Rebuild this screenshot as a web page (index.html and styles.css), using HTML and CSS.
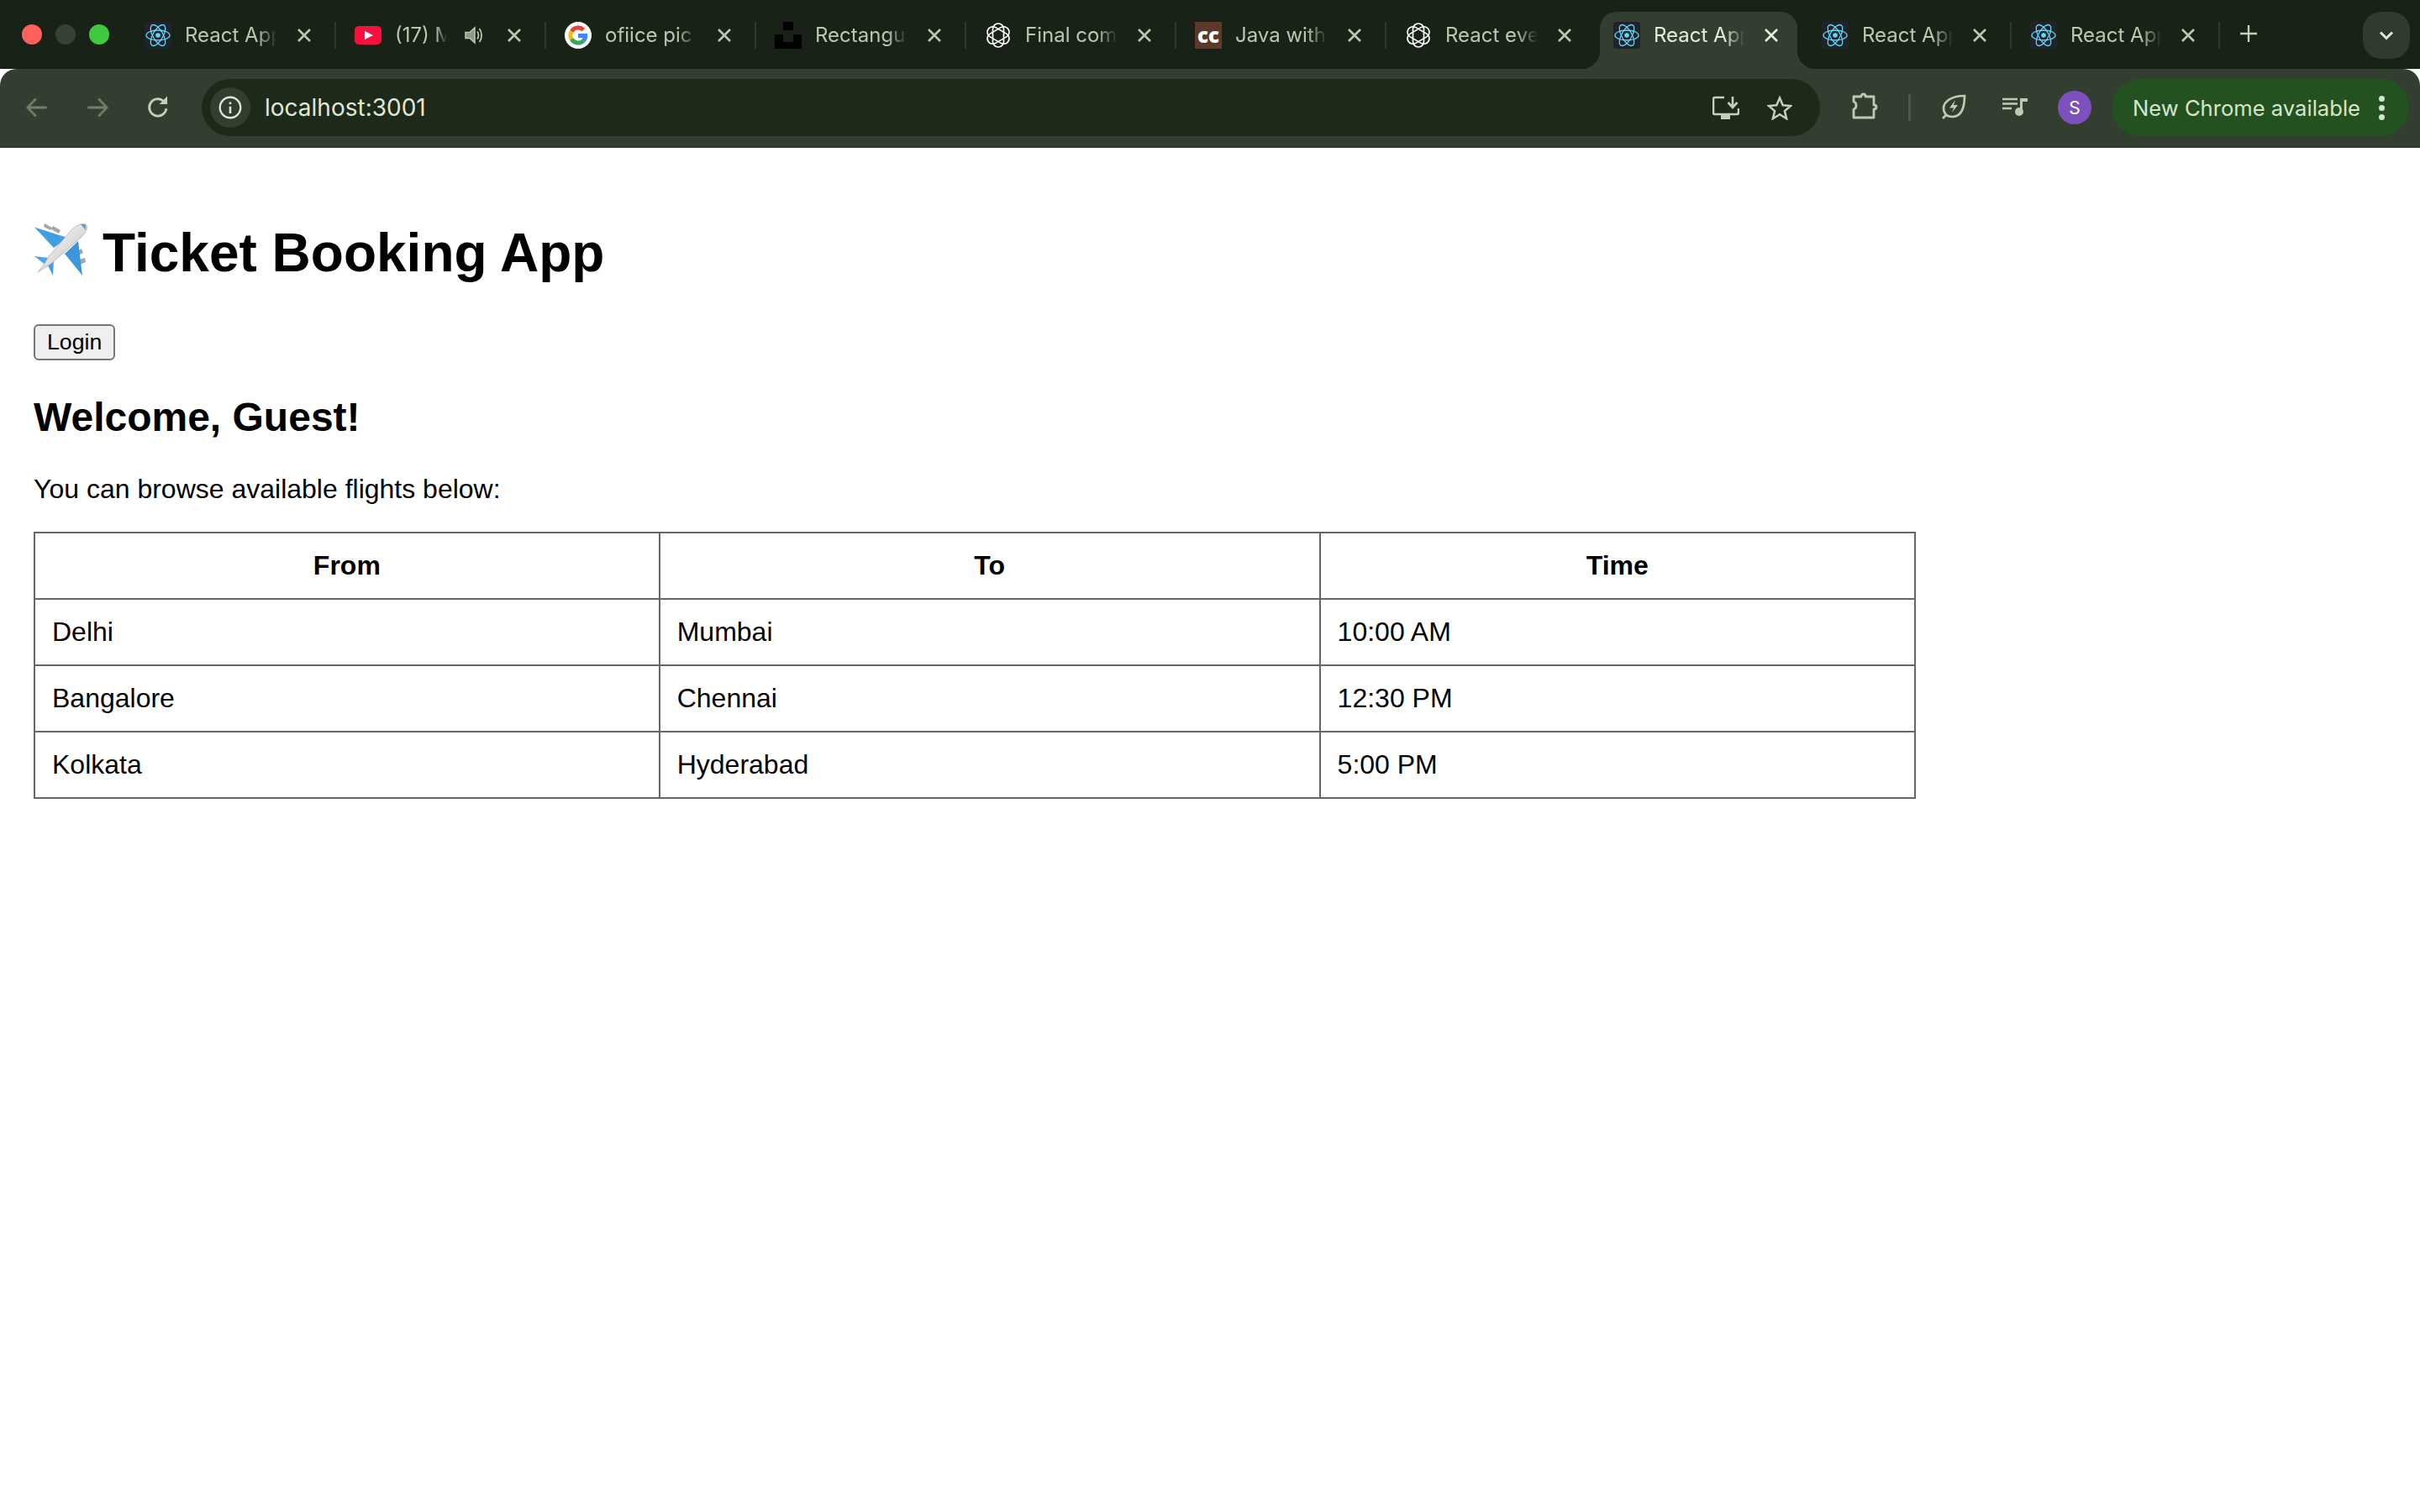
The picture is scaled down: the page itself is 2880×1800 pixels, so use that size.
FILE: index.html
```html
<!DOCTYPE html>
<html lang="en">
<head>
    <meta charset="UTF-8">
    <title>React App</title>
    <link rel="stylesheet" href="styles.css">
</head>
<body>
    <svg class="icon-defs" width="0" height="0">
        <symbol id="react" viewBox="0 0 32 32">
            <rect width="32" height="32" rx="3" fill="#20232a"/>
            <g fill="none" stroke="#61dafb" stroke-width="1.3">
                <ellipse cx="16" cy="16" rx="14" ry="6"/>
                <ellipse cx="16" cy="16" rx="14" ry="6" transform="rotate(60 16 16)"/>
                <ellipse cx="16" cy="16" rx="14" ry="6" transform="rotate(120 16 16)"/>
            </g>
            <circle cx="16" cy="16" r="2.8" fill="#61dafb"/>
        </symbol>
        <symbol id="openai" viewBox="0 0 32 32">
            <g fill="none" stroke="#fff" stroke-width="1.7">
                <rect x="9.500" y="2" width="13" height="28" rx="6.500"/>
                <rect x="9.500" y="2" width="13" height="28" rx="6.500" transform="rotate(60 16 16)"/>
                <rect x="9.500" y="2" width="13" height="28" rx="6.500" transform="rotate(120 16 16)"/>
            </g>
        </symbol>
        <symbol id="close" viewBox="0 0 24 24">
            <path d="M5 5 19 19M19 5 5 19" fill="none" stroke="currentColor" stroke-width="2.6"/>
        </symbol>
    </svg>

    <header class="tabstrip">
        <div class="traffic-lights">
            <span class="light red"></span>
            <span class="light idle"></span>
            <span class="light green"></span>
        </div>

        <div class="tab">
            <svg class="favicon"><use href="#react"/></svg>
            <span class="tab-title">React App</span>
            <svg class="tab-close"><use href="#close"/></svg>
        </div>
        <span class="tab-sep"></span>

        <div class="tab">
            <svg class="favicon" viewBox="0 0 32 32">
                <rect y="5" width="32" height="22" rx="5" fill="#f9103c"/>
                <path d="M12 11 22 16 12 21Z" fill="#fff"/>
            </svg>
            <span class="tab-title">(17) M</span>
            <svg class="tab-audio" viewBox="0 0 24 24">
                <path d="M2 8.5H7L13 3V21L7 15.500H2Z" fill="#8d9b85" stroke="#b9c8ae" stroke-width="1.5"/>
                <path d="M16 7.500C18 10 18 14 16 16.500M18.500 4C22 8.500 22 15.500 18.500 20" fill="none" stroke="#b9c8ae" stroke-width="1.8"/>
            </svg>
            <svg class="tab-close"><use href="#close"/></svg>
        </div>
        <span class="tab-sep"></span>

        <div class="tab">
            <svg class="favicon" viewBox="0 0 32 32">
                <circle cx="16" cy="16" r="16" fill="#fff"/>
                <g fill="none" stroke-width="5">
                    <path d="M8.200 11.500A9 9 0 0 1 22.400 9.600" stroke="#ea4335"/>
                    <path d="M8.200 11.500A9 9 0 0 0 8.200 20.500" stroke="#fbbc05"/>
                    <path d="M8.200 20.500A9 9 0 0 0 22.400 22.400" stroke="#34a853"/>
                    <path d="M16 16.500H27M24.900 16A9 9 0 0 1 22.400 22.400" stroke="#4285f4"/>
                </g>
            </svg>
            <span class="tab-title">ofiice pic</span>
            <svg class="tab-close"><use href="#close"/></svg>
        </div>
        <span class="tab-sep"></span>

        <div class="tab">
            <svg class="favicon" viewBox="0 0 32 32">
                <path d="M10 0H22V10H10ZM0 15H10V24H22V15H32V32H0Z" fill="#000"/>
            </svg>
            <span class="tab-title">Rectangu</span>
            <svg class="tab-close"><use href="#close"/></svg>
        </div>
        <span class="tab-sep"></span>

        <div class="tab">
            <svg class="favicon"><use href="#openai"/></svg>
            <span class="tab-title">Final com</span>
            <svg class="tab-close"><use href="#close"/></svg>
        </div>
        <span class="tab-sep"></span>

        <div class="tab">
            <span class="favicon cc-icon">cc</span>
            <span class="tab-title">Java with</span>
            <svg class="tab-close"><use href="#close"/></svg>
        </div>
        <span class="tab-sep"></span>

        <div class="tab">
            <svg class="favicon"><use href="#openai"/></svg>
            <span class="tab-title">React eve</span>
            <svg class="tab-close"><use href="#close"/></svg>
        </div>

        <div class="tab active">
            <svg class="favicon"><use href="#react"/></svg>
            <span class="tab-title">React App</span>
            <svg class="tab-close"><use href="#close"/></svg>
        </div>

        <div class="tab after-active">
            <svg class="favicon"><use href="#react"/></svg>
            <span class="tab-title">React App</span>
            <svg class="tab-close"><use href="#close"/></svg>
        </div>
        <span class="tab-sep"></span>

        <div class="tab after-active">
            <svg class="favicon"><use href="#react"/></svg>
            <span class="tab-title">React App</span>
            <svg class="tab-close"><use href="#close"/></svg>
        </div>
        <span class="tab-sep"></span>

        <svg class="new-tab" viewBox="0 0 24 24">
            <path d="M12 2V22M2 12H22" fill="none" stroke="#c3d1b9" stroke-width="2.400"/>
        </svg>

        <div class="tab-search">
            <svg viewBox="0 0 24 24" width="24" height="24">
                <path d="M5 8.500 12 15.500 19 8.500" fill="none" stroke="#dfe8d8" stroke-width="3"/>
            </svg>
        </div>
    </header>

    <nav class="toolbar">
        <button class="nav-btn">
            <svg viewBox="0 0 24 24"><path d="M22 12H3M11 3 2.500 12 11 21" fill="none" stroke="#6f7d69" stroke-width="2.400"/></svg>
        </button>
        <button class="nav-btn">
            <svg viewBox="0 0 24 24"><path d="M2 12H21M13 3 21.500 12 13 21" fill="none" stroke="#6f7d69" stroke-width="2.400"/></svg>
        </button>
        <button class="nav-btn">
            <svg viewBox="0 0 24 24"><path d="M20.500 13A8.700 8.700 0 1 1 17.500 5.300" fill="none" stroke="#c3d1b9" stroke-width="2.400"/><path d="M13.500 8.500H21.500V0.500Z" fill="#c3d1b9"/></svg>
        </button>

        <div class="omnibox">
            <span class="site-info">
                <svg viewBox="0 0 24 24" width="28" height="28">
                    <circle cx="12" cy="12" r="10.500" fill="none" stroke="#dfe8d8" stroke-width="2"/>
                    <path d="M12 11V18M12 6.500V8.500" fill="none" stroke="#dfe8d8" stroke-width="2.200"/>
                </svg>
            </span>
            <span class="url">localhost:3001</span>
            <svg class="install-icon" viewBox="0 0 32 28">
                <path d="M14 2H3Q1 2 1 4V20Q1 22 3 22H29Q31 22 31 20V15" fill="none" stroke="#c3d1b9" stroke-width="2.600"/>
                <path d="M10 22H21V28H10Z" fill="#c3d1b9"/>
                <path d="M24 1V13M18.500 8 24 14 29.500 8" fill="none" stroke="#c3d1b9" stroke-width="2.600"/>
            </svg>
            <svg class="star-icon" viewBox="0 0 30 29">
                <path d="M15 2.500 18.700 11.300 28 12 20.900 18.100 23.100 27.200 15 22.300 6.900 27.200 9.100 18.100 2 12 11.300 11.300Z" fill="none" stroke="#c3d1b9" stroke-width="2.500"/>
            </svg>
        </div>

        <svg class="puzzle-icon" viewBox="0 0 32 32">
            <path d="M2 5H11C11 1 16 1 16 5H26V15C30 15 30 20 26 20V30H2V20C6 19 6 12 2 11Z" fill="none" stroke="#bccbb1" stroke-width="2.800" stroke-linejoin="round"/>
        </svg>
        <span class="toolbar-sep"></span>
        <svg class="leaf-icon" viewBox="0 0 30 30">
            <path d="M28 2C28 16 24 27 13 27C6 27 3 22 3 17C3 8 14 2 28 2Z" fill="none" stroke="#bccbb1" stroke-width="2.700"/>
            <path d="M7 24 2 29" fill="none" stroke="#bccbb1" stroke-width="2.700"/>
            <path d="M17 7 10 16.500H15L13 22 20 13H15Z" fill="#bccbb1"/>
        </svg>
        <svg class="queue-icon" viewBox="0 0 30 22">
            <path d="M0 2H18M0 7.500H18M0 13H11" fill="none" stroke="#bccbb1" stroke-width="2.400"/>
            <path d="M21 1H30V5H24V17H21Z" fill="#bccbb1"/>
            <circle cx="20" cy="17" r="5" fill="#bccbb1"/>
        </svg>
        <span class="avatar">S</span>

        <div class="update-chip">
            <span>New Chrome available</span>
            <span class="chip-dots"><i></i><i></i><i></i></span>
        </div>
    </nav>

    <main class="page">
        <h1 class="page-title">
            <svg class="plane" viewBox="10 7 64 63">
                <defs>
                    <linearGradient id="planeBody" x1="0" y1="0" x2="1" y2="1">
                        <stop offset="0" stop-color="#ffffff"/>
                        <stop offset="0.55" stop-color="#dcdcdc"/>
                        <stop offset="1" stop-color="#808080"/>
                    </linearGradient>
                </defs>
                <path d="M23 7 32 12 30 15 22 11ZM33 10 42 15 40 19 31 14ZM60 41 67 37 69 42 62 46ZM64 50 71 48 72 53 65 56Z" fill="#a5a5a5"/>
                <path d="M11 11.500 50 24 34 36Z" fill="#3f9fe2"/>
                <path d="M68 69 63 28 47 43Z" fill="#3a97dc"/>
                <path d="M11 46 28 48 25 57Z" fill="#4aa6e6"/>
                <path d="M33 69 26 55 34 49Z" fill="#3f9fe2"/>
                <path d="M72 8C66 6 60 10 54 16L28 46C26 50 24 54 15 65C26 58 30 56 34 52L66 24C72 18 76 12 72 8Z" fill="url(#planeBody)" stroke="#a8a8a8" stroke-width="0.700"/>
                <path d="M72 8 66 8 72 15Z" fill="#4aa6e6"/>
            </svg>
            <span>Ticket Booking App</span>
        </h1>

        <div class="login-row">
            <button class="login-btn">Login</button>
        </div>

        <h2 class="welcome">Welcome, Guest!</h2>
        <p class="intro">You can browse available flights below:</p>

        <table class="flights">
            <thead>
                <tr><th>From</th><th>To</th><th>Time</th></tr>
            </thead>
            <tbody>
                <tr><td>Delhi</td><td>Mumbai</td><td>10:00 AM</td></tr>
                <tr><td>Bangalore</td><td>Chennai</td><td>12:30 PM</td></tr>
                <tr><td>Kolkata</td><td>Hyderabad</td><td>5:00 PM</td></tr>
            </tbody>
        </table>
    </main>
</body>
</html>
```

FILE: styles.css
```css
* {
    box-sizing: border-box;
}
body {
    margin: 0;
    background: #fff;
    color: #000;
    font-family: "Liberation Sans", Arial, sans-serif;
}
.icon-defs {
    display: block;
    height: 0;
}

/* tab strip */
.tabstrip {
    display: flex;
    height: 82px;
    background: #192217;
    font-family: Inter, Roboto, sans-serif;
}
.traffic-lights {
    width: 150px;
    flex: none;
    display: flex;
    gap: 16px;
    padding: 29px 0 0 26px;
}
.light {
    width: 24px;
    height: 24px;
    border-radius: 50%;
}
.light.red { background: #ff605c; }
.light.idle { background: #374235; }
.light.green { background: #3ec93e; }

.tab {
    position: relative;
    width: 248px;
    height: 68px;
    margin-top: 14px;
    padding: 12px 24px 0 22px;
    flex: none;
    display: flex;
    align-items: flex-start;
    color: #b9c8ae;
}
.tab.after-active {
    width: 246px;
    margin-left: 7px;
}
.tab.after-active ~ .tab.after-active {
    margin-left: 0;
}
.tab.active {
    width: 235px;
    margin-left: 6px;
    padding: 12px 19px 0 16px;
    background: #323e2f;
    border-radius: 20px 20px 0 0;
    color: #e4ecdc;
}
.tab.active::before,
.tab.active::after {
    content: "";
    position: absolute;
    bottom: 0;
    width: 22px;
    height: 22px;
}
.tab.active::before {
    left: -22px;
    background: radial-gradient(circle at 0 0, transparent 22px, #323e2f 22.500px);
}
.tab.active::after {
    right: -22px;
    background: radial-gradient(circle at 100% 0, transparent 22px, #323e2f 22.500px);
}
.favicon {
    width: 32px;
    height: 32px;
    flex: none;
}
.cc-icon {
    display: flex;
    align-items: center;
    justify-content: center;
    background: #5b3a29;
    color: #fff;
    font-family: "Open Sans", sans-serif;
    font-size: 24px;
    font-weight: 800;
    line-height: 32px;
}
.tab-title {
    flex: 1;
    min-width: 0;
    margin: 0 20px 0 16px;
    overflow: hidden;
    white-space: nowrap;
    font-size: 24px;
    line-height: 32px;
    -webkit-mask-image: linear-gradient(to right, #000 78%, transparent 100%);
    mask-image: linear-gradient(to right, #000 78%, transparent 100%);
}
.tab-audio {
    width: 24px;
    height: 24px;
    margin: 4px 24px 0 0;
    flex: none;
}
.tab-close {
    width: 24px;
    height: 24px;
    margin-top: 4px;
    flex: none;
}
.tab-sep {
    width: 2px;
    height: 32px;
    margin-top: 26px;
    flex: none;
    background: #2d3a2a;
}
.new-tab {
    width: 24px;
    height: 24px;
    margin: 28px 0 0 22px;
    flex: none;
}
.tab-search {
    width: 56px;
    height: 56px;
    margin: 14px 12px 0 auto;
    display: flex;
    align-items: center;
    justify-content: center;
    background: #2f3b2c;
    border-radius: 22px;
}

/* toolbar */
.toolbar {
    height: 94px;
    padding: 12px 12px 0 8px;
    display: flex;
    align-items: flex-start;
    background: #323e2f;
    border-bottom: 2px solid #2c392b;
    border-radius: 20px 20px 0 0;
    font-family: Inter, Roboto, sans-serif;
}
.nav-btn {
    width: 72px;
    height: 68px;
    padding: 0;
    flex: none;
    display: flex;
    align-items: center;
    justify-content: center;
    background: none;
    border: none;
}
.nav-btn svg {
    width: 28px;
    height: 28px;
}
.omnibox {
    width: 1926px;
    height: 68px;
    margin-left: 16px;
    padding: 0 33px 0 10px;
    flex: none;
    display: flex;
    align-items: center;
    background: #1d2919;
    border-radius: 34px;
}
.site-info {
    width: 48px;
    height: 48px;
    flex: none;
    display: flex;
    align-items: center;
    justify-content: center;
    background: #323e2f;
    border-radius: 50%;
}
.url {
    margin-left: 17px;
    flex: 1;
    color: #dfe8d8;
    font-size: 28px;
}
.install-icon {
    width: 32px;
    height: 28px;
    flex: none;
}
.star-icon {
    width: 30px;
    height: 29px;
    margin-left: 33px;
    flex: none;
}
.puzzle-icon {
    width: 32px;
    height: 32px;
    margin: 16px 0 0 38px;
    flex: none;
}
.toolbar-sep {
    width: 3px;
    height: 32px;
    margin: 18px 0 0 35px;
    flex: none;
    background: #4d5a49;
}
.leaf-icon {
    width: 30px;
    height: 30px;
    margin: 18px 0 0 36px;
    flex: none;
}
.queue-icon {
    width: 30px;
    height: 22px;
    margin: 22px 0 0 43px;
    flex: none;
}
.avatar {
    width: 40px;
    height: 40px;
    margin: 14px 0 0 36px;
    flex: none;
    display: flex;
    align-items: center;
    justify-content: center;
    background: #7e50bd;
    border-radius: 50%;
    color: #fff;
    font-size: 21px;
}
.update-chip {
    width: 354px;
    height: 68px;
    margin-left: 24px;
    padding: 0 29px 0 25px;
    flex: none;
    display: flex;
    align-items: center;
    justify-content: space-between;
    background: #235120;
    border-radius: 34px;
    color: #d6e6cc;
    font-size: 25.600px;
    white-space: nowrap;
}
.chip-dots {
    display: flex;
    flex-direction: column;
    gap: 4px;
}
.chip-dots i {
    width: 7px;
    height: 7px;
    background: #d6e6cc;
    border-radius: 50%;
}

/* page */
.page {
    padding: 40px;
}
.page-title {
    display: flex;
    gap: 18px;
    align-items: center;
    margin: 48px 0 48px;
    font-size: 64px;
    line-height: 74px;
    font-weight: bold;
}
.plane {
    width: 64px;
    height: 63px;
    margin-bottom: 8px;
    flex: none;
}
.login-row {
    display: flex;
}
.login-btn {
    padding: 4px 14px;
    background: #efefef;
    border: 2px solid #767676;
    border-radius: 6px;
    color: #000;
    font-family: "Liberation Sans", Arial, sans-serif;
    font-size: 26.670px;
}
.welcome {
    margin: 40px 0 40px;
    font-size: 48px;
    line-height: 55px;
    font-weight: bold;
}
.intro {
    margin: 0 0 32px;
    font-size: 32px;
    line-height: 37px;
}
.flights {
    width: 2240px;
    border-collapse: collapse;
    font-size: 32px;
}
.flights th,
.flights td {
    padding: 20px;
    border: 2px solid #666;
    line-height: 37px;
}
.flights td {
    text-align: left;
}
```
